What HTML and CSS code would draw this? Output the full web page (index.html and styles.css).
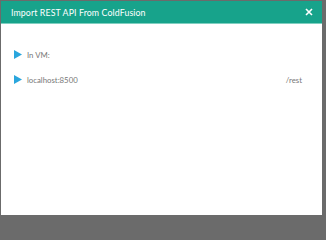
FILE: index.html
```html
<!DOCTYPE html>
<html>
<head>
<meta charset="utf-8">
<link rel="stylesheet" href="styles.css">
</head>
<body>
<div class="frame">
  <div class="dialog">
    <div class="header">
      <span class="title">Import REST API From ColdFusion</span>
      <svg class="close" width="8" height="8" viewBox="0 0 8 8"><path d="M1 1L7 7M7 1L1 7" stroke="#fff" stroke-width="1.6"/></svg>
    </div>
    <div class="body">
      <div class="row">
        <svg class="tri" width="8" height="9" viewBox="0 0 8 9"><path d="M0 0L8 4.5L0 9Z" fill="#2aa6dd"/></svg>
        <span class="label">In VM:</span>
      </div>
      <div class="row">
        <svg class="tri" width="8" height="9" viewBox="0 0 8 9"><path d="M0 0L8 4.5L0 9Z" fill="#2aa6dd"/></svg>
        <span class="label">localhost:8500</span>
        <span class="path">/rest</span>
      </div>
    </div>
  </div>
</div>
</body>
</html>
```
FILE: styles.css
```css
html, body {
  margin: 0;
  padding: 0;
  background: #6b6b6b;
  font-family: Lato, "Open Sans", sans-serif;
}
.frame {
  width: 326px;
  height: 217px;
  padding: 1px 4px 2px 1px;
  box-sizing: border-box;
}
.dialog {
  height: 100%;
  background: #fff;
  display: flex;
  flex-direction: column;
}
.header {
  height: 22px;
  background: #17a38b;
  border-bottom: 1px solid #7fcfc0;
  display: flex;
  align-items: center;
  justify-content: space-between;
  padding: 0 9px 0 10px;
  flex-shrink: 0;
}
.title {
  color: #fff;
  font-size: 8.8px;
  letter-spacing: 0.1px;
}
.close {
  display: block;
}
.body {
  padding: 26px 0 0 13px;
  display: flex;
  flex-direction: column;
  gap: 16px;
}
.row {
  display: flex;
  align-items: center;
  height: 9px;
  padding-right: 20px;
}
.tri {
  display: block;
  margin-right: 5px;
}
.label, .path {
  font-size: 7.8px;
  color: #777;
}
.path {
  margin-left: auto;
}
```
